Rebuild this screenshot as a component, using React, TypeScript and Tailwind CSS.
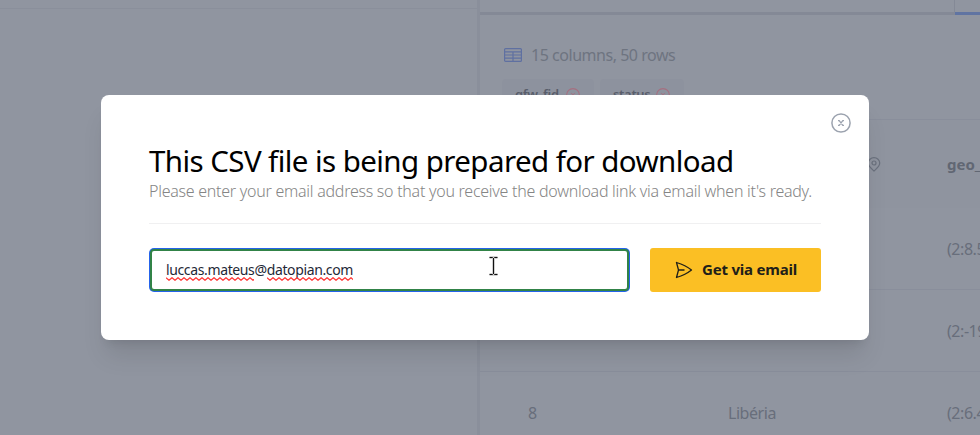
import React from "react";

function CircleX({ className }: { className: string }) {
  return (
    <svg className={className} viewBox="0 0 20 20" fill="none" stroke="currentColor">
      <circle cx="10" cy="10" r="9.1" strokeWidth="1.5" />
      <path d="M7 7.7h1.2l3.6 4.6H13M13 7.7h-1.2l-3.6 4.6H7" strokeWidth="1.3" />
    </svg>
  );
}

function Chip({ label, className }: { label: string; className: string }) {
  return (
    <div className={`flex h-8 items-center justify-between rounded bg-[#8d929e] pl-[13px] pr-[14px] text-[13px] font-semibold tracking-[-0.3px] text-[#595e6b] ${className}`}>
      <span className="whitespace-nowrap">{label}</span>
      <CircleX className="size-[14px] text-[#a66f80]" />
    </div>
  );
}

function Row({ id, country, geo }: { id: string; country: string; geo: string }) {
  return (
    <div className="flex h-[82px] shrink-0 border-b border-[#898e9b] pt-px text-base tracking-[-0.45px] text-[#686e7b]">
      <div className="flex w-[248px] shrink-0 items-center pl-12">{id}</div>
      <div className="flex w-[219px] shrink-0 items-center">{country}</div>
      <div className="flex items-center whitespace-nowrap">{geo}</div>
    </div>
  );
}

/* Spell-check underline: a zigzag as wide as the word above it. */
function Misspelled({ children, steps }: { children: string; steps: number }) {
  const points = Array.from({ length: steps }, (_, i) => `${i * 3},${i % 2 ? 3.3 : 0.7}`).join(" ");
  return (
    <span className="relative">
      {children}
      <svg className="absolute -bottom-px left-0 h-1 w-full overflow-hidden" fill="none">
        <polyline points={points} stroke="#ff3838" strokeWidth="1.2" />
      </svg>
    </span>
  );
}

export default function App() {
  return (
    <div className="relative flex h-[435px] w-[980px] overflow-hidden bg-[#9095a0] font-['Noto_Sans',sans-serif]">
      <aside className="w-[480px] shrink-0 border-r-[3px] border-[#8a8f9b]">
        <div className="h-[9px] border-b border-[#8a8f9b]" />
      </aside>
      <main className="flex min-w-0 flex-1 flex-col overflow-hidden">
        <div className="flex h-[15px] shrink-0">
          <div className="flex w-[475px] shrink-0 justify-end border-b-[3px] border-[#848996]">
            <div className="w-px bg-[#848996]" />
          </div>
          <div className="flex-1 border-b-[3px] border-[#6074a2]" />
        </div>
        <div className="flex h-[105px] shrink-0 flex-col border-b border-[#898e9b] pl-[22px] pt-[30px]">
          <div className="flex h-5 items-center">
            <svg className="ml-[2px] mr-[9px] h-[14px] w-[18px] text-[#5f70a1]" viewBox="0 0 18 14" fill="none" stroke="currentColor">
              <rect x=".6" y=".6" width="16.8" height="12.8" rx="1" strokeWidth="1.2" />
              <path d="M1 3.8h16M1 7h16M1 10.2h16M9 3.8v9.2" strokeWidth="1.2" />
            </svg>
            <span className="text-base tracking-[-0.47px] text-[#6e7480]">15 columns, 50 rows</span>
          </div>
          <div className="mt-[14px] flex gap-[6px]">
            <Chip label="gfw_fid" className="w-[92px]" />
            <Chip label="status" className="w-[84px]" />
          </div>
        </div>
        <div className="flex h-[88px] shrink-0 bg-[#8f949f] pl-[387px] pt-px text-[#616773]">
          <div className="flex w-20 shrink-0 items-center">
            <svg className="h-[15px] w-[14px] text-[#6a707d]" viewBox="0 0 14 15" fill="none" stroke="currentColor" strokeWidth="1.2">
              <path d="M7 14C4.8 11.9 1.3 9.6 1.3 6a5.7 5.3 0 0 1 11.4 0c0 3.6-3.5 5.9-5.7 8Z" />
              <circle cx="7" cy="6" r="2" />
            </svg>
          </div>
          <div className="flex items-center text-[15px] font-bold">geo_</div>
        </div>
        <Row id="6" country="Angola" geo="(2:8.5" />
        <Row id="7" country="Brasil" geo="(2:-19" />
        <Row id="8" country="Libéria" geo="(2:6.4" />
      </main>

      <section role="dialog" className="absolute left-[101px] top-[95px] h-[245px] w-[768px] rounded-lg bg-white px-12 pt-12 shadow-xl">
        <button className="absolute right-[18px] top-[18px]" aria-label="Close">
          <CircleX className="size-5 text-[#9ca3af]" />
        </button>
        <h1 className="whitespace-nowrap text-[29.5px] leading-9 tracking-[-0.57px] text-black">This CSV file is being prepared for download</h1>
        <p className="h-8 whitespace-nowrap text-base font-light leading-6 tracking-[-0.26px] text-[#858585]">
          Please enter your email address so that you receive the download link via email when it's ready.
        </p>
        <div className="mt-3 h-px bg-[#f0f0f1]" />
        <form className="mt-6 flex gap-5">
          <div className="h-11 w-[481px] shrink-0 rounded-[5px] bg-[#2563eb] p-px">
            <div className="flex h-full items-center rounded border-2 border-[#318347] bg-white pb-px pl-[14px] text-[14px] tracking-[-0.37px] text-[#1f2937]">
              <Misspelled steps={40}>luccas.mateus</Misspelled>
              <span>@</span>
              <Misspelled steps={40}>datopian.com</Misspelled>
            </div>
          </div>
          <button type="button" className="flex h-11 flex-1 items-center rounded-[3px] bg-[#fbbf24] pl-[25px] text-[15px] font-bold tracking-[-0.2px] text-[#202019]">
            <svg className="mr-[9px] h-[18px] w-[18px]" viewBox="0 0 18 18" fill="none" stroke="currentColor" strokeWidth="1.3" strokeLinejoin="round">
              <path d="M1.5 1.5C7 3.2 12 5.4 16.5 9 12 12.6 7 14.8 1.5 16.5L3.5 9ZM3.5 9h6" />
            </svg>
            <span className="pb-px">Get via email</span>
          </button>
        </form>
        <svg className="absolute left-[387px] top-[160px] h-[22px] w-[11px]" viewBox="0 0 11 22" fill="none">
          <path d="M1.5 2.5h3l1 1 1-1h3M5.5 3v16M1.5 19.5h3l1-1 1 1h3" stroke="#d0d0d0" strokeWidth="3" />
          <path d="M1.5 2.5h3l1 1 1-1h3M5.5 3v16M1.5 19.5h3l1-1 1 1h3" stroke="#111" />
        </svg>
      </section>
    </div>
  );
}
